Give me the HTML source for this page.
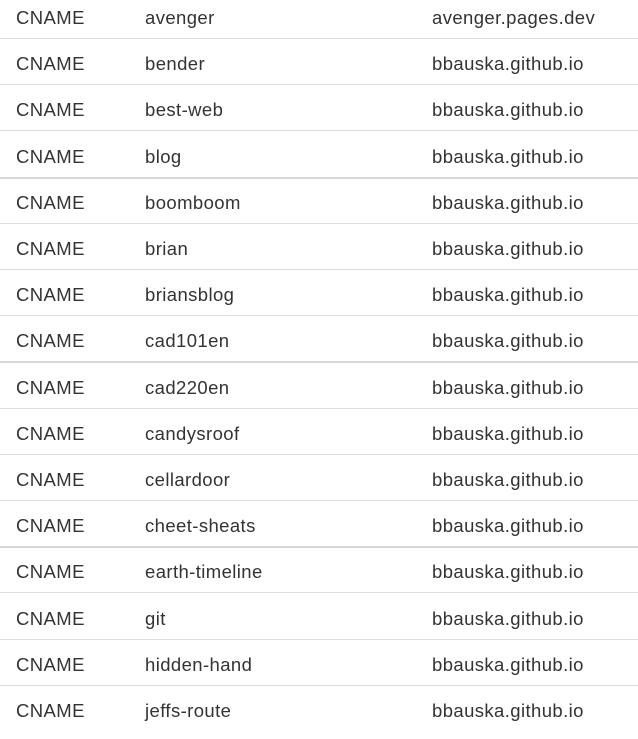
<!DOCTYPE html>
<html><head><style>
body{margin:0;width:638px;height:730px;overflow:hidden;background:#fff;font-family:"Liberation Sans",sans-serif;font-size:18.5px;letter-spacing:0.4px;color:#333;position:relative}
.r{position:absolute;left:0;width:638px;height:46px}
.r span{position:absolute;top:2px;line-height:32px}
.a{left:16px}.b{left:145px}.c{left:432px}
.l{position:absolute;left:0;width:638px;height:1px;background:#dedede}
.t{height:2px;background:#d6d6d6}
</style></head><body>
<div id="w"></div>
<script>
var n=["avenger","bender","best-web","blog","boomboom","brian","briansblog","cad101en","cad220en","candysroof","cellardoor","cheet-sheats","earth-timeline","git","hidden-hand","jeffs-route"];
var h="";
for(var i=0;i<16;i++){var y=Math.round(0+46.2*i);
h+='<div class="r" style="top:'+y+'px"><span class="a">CNAME</span><span class="b">'+n[i]+'</span><span class="c">'+(i==0?"avenger.pages.dev":"bbauska.github.io")+'</span></div>';
if(i<15){var ly=Math.round(38+46.2*i);h+='<div class="l'+(i%4==3?' t':'')+'" style="top:'+ly+'px"></div>';}}
document.getElementById("w").innerHTML=h;
</script>
</body></html>
